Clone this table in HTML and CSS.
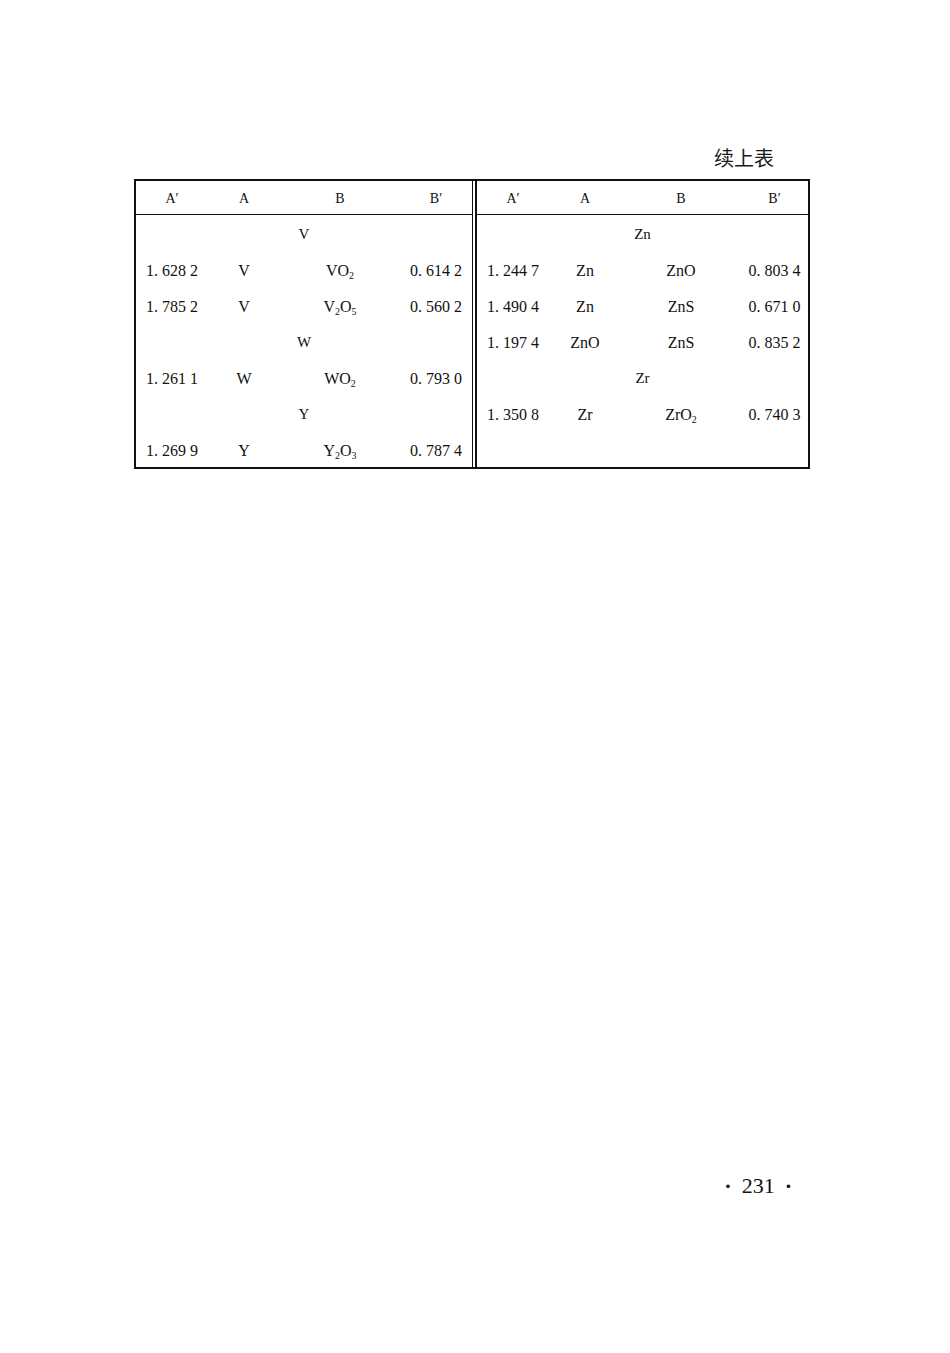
FILE: index.html
```html
<!DOCTYPE html>
<html lang="zh">
<head>
<meta charset="utf-8">
<title>续上表 231</title>
<link rel="stylesheet" href="styles.css">
</head>
<body>
<div class="page">
  <div class="caption">续上表</div>
  <div class="table">
    <div class="panel panel-left">
      <div class="row head">
        <span>A′</span><span>A</span><span>B</span><span>B′</span>
      </div>
      <div class="row group"><span>V</span></div>
      <div class="row"><span>1. 628 2</span><span>V</span><span>VO<sub>2</sub></span><span>0. 614 2</span></div>
      <div class="row"><span>1. 785 2</span><span>V</span><span>V<sub>2</sub>O<sub>5</sub></span><span>0. 560 2</span></div>
      <div class="row group"><span>W</span></div>
      <div class="row"><span>1. 261 1</span><span>W</span><span>WO<sub>2</sub></span><span>0. 793 0</span></div>
      <div class="row group"><span>Y</span></div>
      <div class="row"><span>1. 269 9</span><span>Y</span><span>Y<sub>2</sub>O<sub>3</sub></span><span>0. 787 4</span></div>
    </div>
    <div class="panel panel-right">
      <div class="row head">
        <span>A′</span><span>A</span><span>B</span><span>B′</span>
      </div>
      <div class="row group"><span>Zn</span></div>
      <div class="row"><span>1. 244 7</span><span>Zn</span><span>ZnO</span><span>0. 803 4</span></div>
      <div class="row"><span>1. 490 4</span><span>Zn</span><span>ZnS</span><span>0. 671 0</span></div>
      <div class="row"><span>1. 197 4</span><span>ZnO</span><span>ZnS</span><span>0. 835 2</span></div>
      <div class="row group"><span>Zr</span></div>
      <div class="row"><span>1. 350 8</span><span>Zr</span><span>ZrO<sub>2</sub></span><span>0. 740 3</span></div>
      <div class="row empty"></div>
    </div>
  </div>
  <div class="folio"><span class="dot">·</span>231<span class="dot">·</span></div>
</div>
</body>
</html>
```

FILE: styles.css
```css
html, body {
  margin: 0;
  padding: 0;
  background: #ffffff;
}

body {
  font-family: "Liberation Serif", "Times New Roman", serif;
  color: #111111;
}

.page {
  width: 950px;
  height: 1353px;
  padding-top: 147px;
  box-sizing: border-box;
}

.caption {
  font-family: "Noto Sans CJK SC", "Noto Sans CJK JP", sans-serif;
  font-size: 20px;
  line-height: 22px;
  text-align: right;
  padding-right: 176px;
  color: #1a1a1a;
}

.table {
  margin-top: 10px;
  margin-left: 134px;
  width: 676px;
  box-sizing: border-box;
  border: 2px solid #111111;
  display: flex;
  gap: 2px;
}

.panel {
  display: flex;
  flex-direction: column;
}

.panel-left {
  width: 336px;
  border-right: 1px solid #111111;
}

.panel-right {
  flex: 1;
  border-left: 2px solid #111111;
}

.row {
  display: grid;
  grid-template-columns: 72px 72px 120px 1fr;
  align-items: center;
  height: 36px;
  padding-top: 4px;
  box-sizing: border-box;
  font-size: 16px;
  line-height: 18px;
}

.row span {
  text-align: center;
  white-space: pre;
}

.row.head {
  height: 34px;
  border-bottom: 1px solid #111111;
  font-size: 14px;
  padding-top: 3px;
}

.row.group {
  grid-template-columns: 1fr;
  font-size: 15px;
  padding-top: 2px;
}

.row sub {
  font-size: 10px;
  line-height: 0;
  vertical-align: -3px;
}

.folio {
  margin-top: 705px;
  font-size: 22px;
  line-height: 24px;
  text-align: right;
  padding-right: 148px;
  color: #111111;
}

.folio .dot {
  display: inline-block;
  margin: 0 10px;
  font-weight: bold;
}
```
